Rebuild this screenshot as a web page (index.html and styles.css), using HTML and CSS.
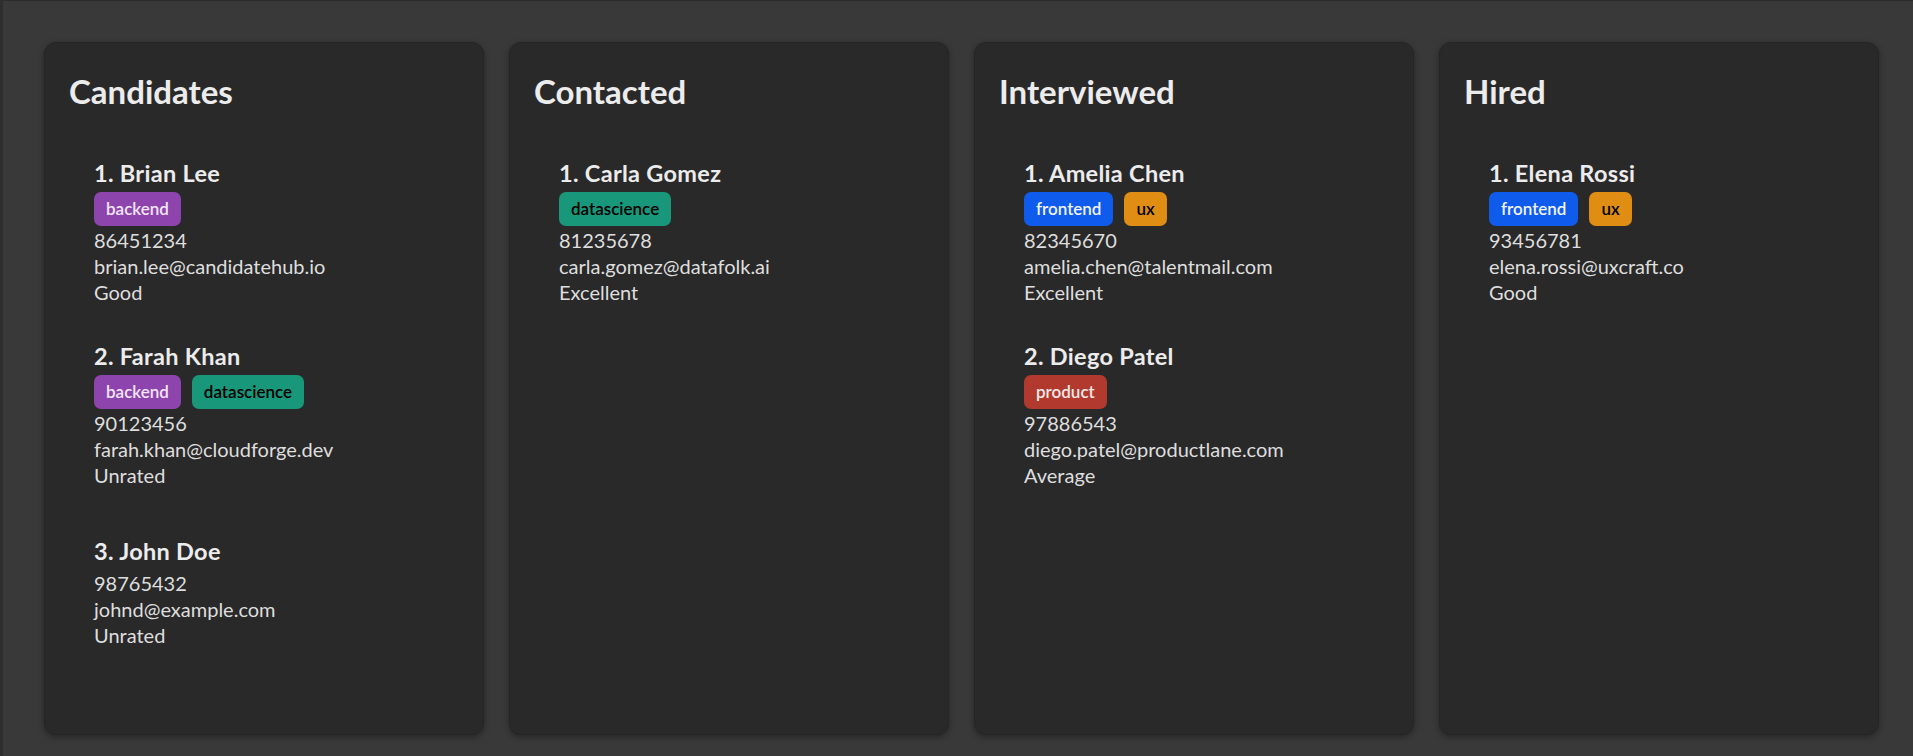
FILE: index.html
```html
<!DOCTYPE html>
<html lang="en">
<head>
<meta charset="utf-8">
<title>Recruitment Board</title>
<link rel="stylesheet" href="styles.css">
</head>
<body>
<main class="board">
  <section class="column">
    <h2 class="column-title">Candidates</h2>
    <ul class="cards">
      <li class="person">
        <h3 class="name">1. Brian Lee</h3>
        <div class="tags"><span class="tag tag-backend">backend</span></div>
        <div class="detail">86451234</div>
        <div class="detail">brian.lee@candidatehub.io</div>
        <div class="detail">Good</div>
      </li>
      <li class="person">
        <h3 class="name">2. Farah Khan</h3>
        <div class="tags"><span class="tag tag-backend">backend</span><span class="tag tag-datascience">datascience</span></div>
        <div class="detail">90123456</div>
        <div class="detail">farah.khan@cloudforge.dev</div>
        <div class="detail">Unrated</div>
      </li>
      <li class="person no-tags">
        <h3 class="name">3. John Doe</h3>
        <div class="detail">98765432</div>
        <div class="detail">johnd@example.com</div>
        <div class="detail">Unrated</div>
      </li>
    </ul>
  </section>
  <section class="column">
    <h2 class="column-title">Contacted</h2>
    <ul class="cards">
      <li class="person">
        <h3 class="name">1. Carla Gomez</h3>
        <div class="tags"><span class="tag tag-datascience">datascience</span></div>
        <div class="detail">81235678</div>
        <div class="detail">carla.gomez@datafolk.ai</div>
        <div class="detail">Excellent</div>
      </li>
    </ul>
  </section>
  <section class="column">
    <h2 class="column-title">Interviewed</h2>
    <ul class="cards">
      <li class="person">
        <h3 class="name">1. Amelia Chen</h3>
        <div class="tags"><span class="tag tag-frontend">frontend</span><span class="tag tag-ux">ux</span></div>
        <div class="detail">82345670</div>
        <div class="detail">amelia.chen@talentmail.com</div>
        <div class="detail">Excellent</div>
      </li>
      <li class="person">
        <h3 class="name">2. Diego Patel</h3>
        <div class="tags"><span class="tag tag-product">product</span></div>
        <div class="detail">97886543</div>
        <div class="detail">diego.patel@productlane.com</div>
        <div class="detail">Average</div>
      </li>
    </ul>
  </section>
  <section class="column">
    <h2 class="column-title">Hired</h2>
    <ul class="cards">
      <li class="person">
        <h3 class="name">1. Elena Rossi</h3>
        <div class="tags"><span class="tag tag-frontend">frontend</span><span class="tag tag-ux">ux</span></div>
        <div class="detail">93456781</div>
        <div class="detail">elena.rossi@uxcraft.co</div>
        <div class="detail">Good</div>
      </li>
    </ul>
  </section>
</main>
</body>
</html>
```

FILE: styles.css
```css
* {
  box-sizing: border-box;
}

html, body {
  margin: 0;
  height: 100%;
  background: #393939;
}

body {
  font-family: "Lato", "Noto Sans", sans-serif;
  color: #dedede;
  overflow: hidden;
}

.board {
  display: flex;
  gap: 25px;
  height: 756px;
  padding: 41px 34px 21px 41px;
  border-left: 3px solid #2e2e2e;
  border-top: 1px solid #2e2e2e;
}

.column {
  flex: 1 1 0;
  min-width: 0;
  background: #292929;
  border: 1px solid #252525;
  border-radius: 12px;
  box-shadow: 0 2px 6px rgba(0, 0, 0, 0.35);
  padding: 28px 24px 24px;
}

.column-title {
  margin: 0;
  font-size: 33px;
  font-weight: 700;
  line-height: 40px;
  color: #ececec;
}

.cards {
  list-style: none;
  margin: 47px 0 0;
  padding: 0 0 0 25px;
  display: flex;
  flex-direction: column;
  gap: 36px;
}

.person.no-tags {
  margin-top: 12px;
}

.person.no-tags .name {
  margin-bottom: 4px;
}

.name {
  margin: 0;
  font-size: 23.5px;
  font-weight: 700;
  line-height: 30px;
  letter-spacing: 0.3px;
  color: #ececec;
}

.tags {
  display: flex;
  gap: 11px;
  margin: 4px 0 1px;
}

.tag {
  display: inline-block;
  padding: 6px 12px;
  border-radius: 7px;
  font-size: 17px;
  font-weight: 600;
  line-height: 22px;
}

.tag-backend {
  background: #8e44ad;
  color: #f2e6f7;
}

.tag-datascience {
  background: #18977b;
  color: #000;
}

.tag-frontend {
  background: #0e5bec;
  color: #f2f4ff;
}

.tag-ux {
  background: #df8e13;
  color: #000;
}

.tag-product {
  background: #b2392e;
  color: #f7e9e9;
}

.detail {
  font-size: 20px;
  line-height: 26px;
}
```
